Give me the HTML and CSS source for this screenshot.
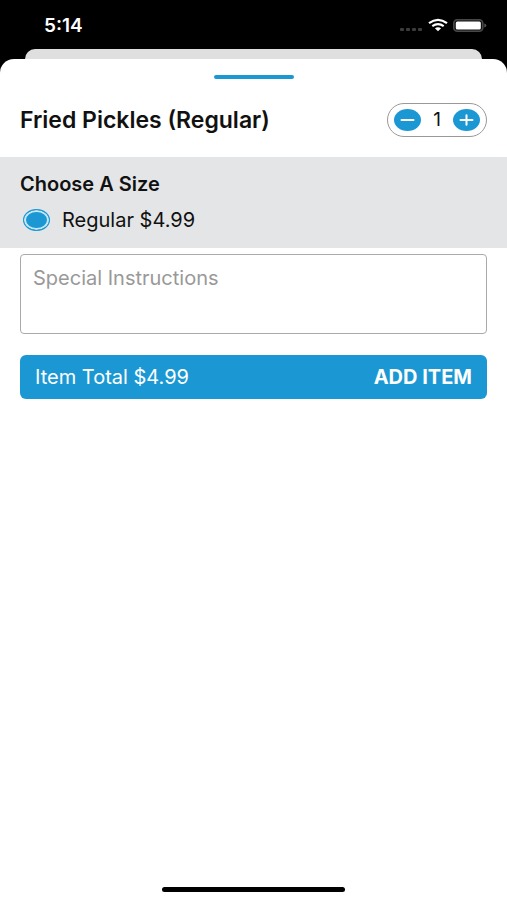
FILE: index.html
```html
<!DOCTYPE html>
<html lang="en">
<head>
<meta charset="utf-8">
<meta name="viewport" content="width=device-width, initial-scale=1">
<title>Fried Pickles (Regular)</title>
<link rel="stylesheet" href="styles.css">
</head>
<body>
<div class="status">
  <time class="clock">5:14</time>
  <svg class="status-icons" width="88" height="16" viewBox="0 0 88 16" aria-hidden="true">
    <g fill="#3c3c3c">
      <rect x="1" y="10" width="4" height="3" rx="1"/>
      <rect x="7" y="10" width="4" height="3" rx="1"/>
      <rect x="13" y="10" width="4" height="3" rx="1"/>
      <rect x="19" y="10" width="4" height="3" rx="1"/>
    </g>
    <g fill="none" stroke="#fff" stroke-width="2.200">
      <path d="M30 5.200Q39 -1.600 48 5.200"/>
      <path d="M33.300 8.200Q39 4 44.700 8.200"/>
    </g>
    <path fill="#fff" d="M35.900 10.300Q39 8 42.100 10.300L39 13.200Z"/>
    <rect x="54.800" y="1.800" width="29" height="11.400" rx="3.500" fill="#111" stroke="#484848" stroke-width="1.600"/>
    <rect x="56.800" y="3.400" width="25" height="8.200" rx="1.500" fill="#fff"/>
    <path d="M85.300 5.500v4q2-.6 2-2t-2-2Z" fill="#555"/>
  </svg>
</div>
<div class="back-sheet"></div>
<main class="sheet">
  <div class="grabber"></div>
  <header class="item-header">
    <h1>Fried Pickles (Regular)</h1>
    <div class="stepper">
      <button type="button" class="step" aria-label="Decrease quantity">
        <svg width="27" height="22" viewBox="0 0 27 22"><path d="M7.500 11H19.500"/></svg>
      </button>
      <output>1</output>
      <button type="button" class="step" aria-label="Increase quantity">
        <svg width="27" height="22" viewBox="0 0 27 22"><path d="M7.500 11H19.500M13.500 6.300V15.700"/></svg>
      </button>
    </div>
  </header>
  <section class="sizes">
    <h2>Choose A Size</h2>
    <label class="option">
      <input type="radio" name="size" checked>
      <span>Regular $4.99</span>
    </label>
  </section>
  <form class="order">
    <textarea aria-label="Special Instructions" placeholder="Special Instructions"></textarea>
    <button type="button" class="add"><span>Item Total $4.99</span><strong>ADD ITEM</strong></button>
  </form>
  <div class="home-indicator"></div>
</main>
</body>
</html>
```
FILE: styles.css
```css
* {
  box-sizing: border-box;
}

body {
  margin: 0;
  min-height: 100vh;
  display: flex;
  flex-direction: column;
  background: #000;
  color: #111;
  font-family: Inter, "Liberation Sans", sans-serif;
  font-size: 20px;
  line-height: 24px;
}

h1,
h2 {
  margin: 0;
  font-weight: 600;
}

button,
textarea {
  font: inherit;
}

.status {
  display: flex;
  align-items: center;
  justify-content: space-between;
  height: 49px;
  padding: 3px 20px 0 44px;
}

.clock {
  color: #fff;
  font-size: 19px;
  font-weight: 600;
}

.back-sheet {
  height: 10px;
  margin: 0 25px;
  border-radius: 12px 12px 0 0;
  background: #dfdfdf;
}

.sheet {
  flex: 1;
  display: flex;
  flex-direction: column;
  border-radius: 14px 14px 0 0;
  background: #fff;
}

.grabber {
  align-self: center;
  width: 80px;
  height: 4px;
  margin-top: 16px;
  border-radius: 2px;
  background: #1b98d3;
}

.item-header {
  display: flex;
  align-items: center;
  justify-content: space-between;
  padding: 24px 20px 20px;
}

h1 {
  font-size: 23px;
}

.stepper {
  display: flex;
  align-items: center;
  justify-content: space-between;
  width: 100px;
  height: 34px;
  padding: 0 6px;
  border: 1px solid #999;
  border-radius: 17px;
}

.stepper output {
  font-size: 19px;
}

.step {
  display: flex;
  width: 27px;
  height: 22px;
  padding: 0;
  border: 0;
  border-radius: 50%;
  background: #1b98d3;
}

.step path {
  fill: none;
  stroke: #fff;
  stroke-width: 2;
  stroke-linecap: round;
}

.sizes {
  padding: 15px 20px 16px;
  background: #e4e5e7;
}

h2 {
  font-size: 20px;
}

.option {
  display: flex;
  align-items: center;
  gap: 12px;
  margin-top: 12px;
  padding-left: 3px;
}

.option input {
  appearance: none;
  width: 27px;
  height: 22px;
  margin: 0;
  border: 1px solid #1b98d3;
  border-radius: 50%;
  background: #1b98d3;
  box-shadow: inset 0 0 0 2px #c8e6f5;
}

.order {
  display: flex;
  flex-direction: column;
  gap: 21px;
  padding: 6px 20px;
}

textarea {
  display: block;
  width: 100%;
  height: 80px;
  padding: 11px 12px;
  border: 1px solid #aaa;
  border-radius: 4px;
  background: #fff;
  resize: none;
}

textarea::placeholder {
  color: #999;
  opacity: 1;
}

.add {
  display: flex;
  align-items: center;
  justify-content: space-between;
  height: 44px;
  padding: 0 15px;
  border: 0;
  border-radius: 6px;
  background: #1b98d3;
  color: #fff;
}

.add strong {
  font-weight: 700;
}

.home-indicator {
  align-self: center;
  width: 36%;
  height: 5px;
  margin: auto 0 8px;
  border-radius: 3px;
  background: #000;
}
```
